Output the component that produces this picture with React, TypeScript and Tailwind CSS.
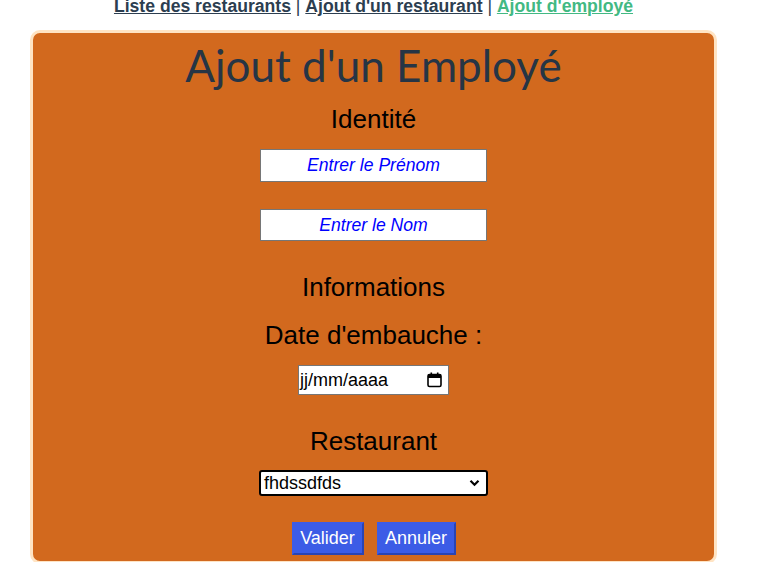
import React from 'react';

const arial = { fontFamily: '"Liberation Sans", Arial, sans-serif' };

function CalendarIcon() {
  return (
    <svg width="15" height="16" viewBox="0 0 15 16" fill="none">
      <rect x="1" y="2.5" width="13" height="12" rx="1.5" stroke="#000" strokeWidth="1.6" />
      <rect x="1" y="2.5" width="13" height="3.5" fill="#000" />
      <rect x="3.5" y="0.5" width="1.6" height="3" fill="#000" />
      <rect x="9.9" y="0.5" width="1.6" height="3" fill="#000" />
    </svg>
  );
}

function Chevron() {
  return (
    <svg width="11" height="8" viewBox="0 0 11 8" fill="none">
      <path d="M1.5 1.8 L5.5 5.8 L9.5 1.8" stroke="#000" strokeWidth="2.2" />
    </svg>
  );
}

export default function App() {
  return (
    <div className="w-[747px] h-[562px] overflow-hidden bg-white text-[#2c3e50]" style={arial}>
      <nav className="-mt-[2px] text-center text-[17.6px] leading-[16px]">
        <a className="font-bold underline text-[#2c3e50]">Liste des restaurants</a>
        <span> | </span>
        <a className="font-bold underline text-[#2c3e50]">Ajout d'un restaurant</a>
        <span> | </span>
        <a className="font-bold underline text-[#42b983]">Ajout d'employé</a>
      </nav>

      <div className="mx-[30px] mt-[16px] h-[534px] rounded-[10px] border-[3px] border-[#ffe4c4] bg-[#d2691e] flex flex-col items-center">
        <h1
          className="mt-[10px] text-[44px] leading-[44px] text-[#263545]"
          style={{ fontFamily: 'Lato, "Open Sans", sans-serif' }}
        >
          Ajout d'un Employé
        </h1>

        <h3 className="mt-[19px] text-[26px] leading-[26px] text-black">Identité</h3>

        <div className="mt-[17px] w-[227px] h-[33px] border border-[#767676] bg-white flex items-center justify-center">
          <span className="italic text-[17.6px] text-[#0000ff]">Entrer le Prénom</span>
        </div>
        <div className="mt-[27px] w-[227px] h-[32px] border border-[#767676] bg-white flex items-center justify-center">
          <span className="italic text-[17.6px] text-[#0000ff]">Entrer le Nom</span>
        </div>

        <h3 className="mt-[33px] text-[26px] leading-[26px] text-black">Informations</h3>
        <h3 className="mt-[22px] text-[26px] leading-[26px] text-black">Date d'embauche :</h3>

        <div className="mt-[17px] w-[151px] h-[30px] border border-[#767676] bg-white flex items-center pl-[1px] pr-[6px]">
          <span className="text-[18px] text-black flex-1">jj/mm/aaaa</span>
          <CalendarIcon />
        </div>

        <h3 className="mt-[33px] text-[26px] leading-[26px] text-black">Restaurant</h3>

        <div className="mt-[16px] w-[229px] h-[26px] border-2 border-black rounded-[3px] bg-white flex items-center pl-[3px] pr-[6px]">
          <span className="text-[18px] text-black flex-1">fhdssdfds</span>
          <Chevron />
        </div>

        <div className="mt-[26px] flex gap-[13px]">
          <button className="w-[72px] h-[33px] bg-[#3c5ce6] text-white text-[18px] border-2 border-[#3c5ce6] border-r-[#2a44b3] border-b-[#2a44b3]">
            Valider
          </button>
          <button className="w-[79px] h-[33px] bg-[#3c5ce6] text-white text-[18px] border-2 border-[#3c5ce6] border-r-[#2a44b3] border-b-[#2a44b3]">
            Annuler
          </button>
        </div>
      </div>
    </div>
  );
}
